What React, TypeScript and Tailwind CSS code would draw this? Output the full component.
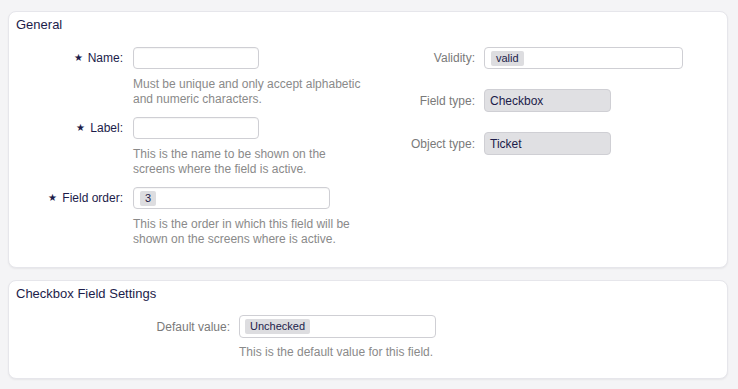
import React from "react";

const help = "text-[12px] leading-[15px] text-[#8a8a8a]";

function Star() {
  return <span className="mr-[5px] inline-block text-[10px] leading-none text-[#1c1c4a]">★</span>;
}

function Chip({ children }: { children: React.ReactNode }) {
  return (
    <span className="rounded-[2px] bg-[#dddde0] px-[5px] py-[1px] text-[11px] leading-[13px] text-[#1c1c4a]">
      {children}
    </span>
  );
}

function LeftRow({
  label,
  width,
  value,
  hint,
}: {
  label: string;
  width: string;
  value?: string;
  hint: string[];
}) {
  return (
    <div className="flex">
      <div className="flex h-[22px] w-[114px] items-center justify-end text-[12px] text-[#1c1c4a]">
        <Star />
        {label}
      </div>
      <div className="ml-[10px]">
        <div
          className={`flex h-[22px] items-center rounded-[4px] border border-[#cfcfd4] bg-white px-[6px] shadow-[inset_0_1px_1px_rgba(0,0,0,0.04)] ${width}`}
        >
          {value && <Chip>{value}</Chip>}
        </div>
        <div className={`mt-[8px] ${help}`}>
          {hint.map((h) => (
            <div key={h}>{h}</div>
          ))}
        </div>
      </div>
    </div>
  );
}

function RightRow({ label, children }: { label: string; children: React.ReactNode }) {
  return (
    <div className="flex items-center">
      <div className="w-[106px] text-right text-[12px] text-[#7a7a7a]">{label}</div>
      <div className="ml-[9px]">{children}</div>
    </div>
  );
}

export default function App() {
  return (
    <div className="min-h-screen bg-[#f4f4f6] pl-2 pr-[10px] pt-[11px] font-['Liberation_Sans',Arial,sans-serif]">
      <div className="rounded-[8px] border border-[#e6e6eb] bg-white pb-[20px] shadow-[0_1px_2px_rgba(0,0,0,0.06)]">
        <h2 className="px-[7px] pt-[5px] text-[13px] leading-[16px] text-[#1c1c4a]">General</h2>
        <div className="mt-[14px] flex">
          <div className="flex w-[360px] flex-col gap-[10px]">
            <LeftRow
              label="Name:"
              width="w-[126px]"
              hint={["Must be unique and only accept alphabetic", "and numeric characters."]}
            />
            <LeftRow
              label="Label:"
              width="w-[126px]"
              hint={["This is the name to be shown on the", "screens where the field is active."]}
            />
            <LeftRow
              label="Field order:"
              width="w-[197px]"
              value="3"
              hint={["This is the order in which this field will be", "shown on the screens where is active."]}
            />
          </div>
          <div className="flex flex-col gap-[20px]">
            <RightRow label="Validity:">
              <div className="flex h-[22px] w-[199px] items-center rounded-[4px] border border-[#cfcfd4] bg-white px-[6px]">
                <Chip>valid</Chip>
              </div>
            </RightRow>
            <RightRow label="Field type:">
              <div className="flex h-[23px] w-[127px] items-center rounded-[4px] border border-[#cfcfd4] bg-[#e0e0e3] px-[5px] text-[12px] text-[#1c1c4a]">
                Checkbox
              </div>
            </RightRow>
            <RightRow label="Object type:">
              <div className="flex h-[23px] w-[127px] items-center rounded-[4px] border border-[#cfcfd4] bg-[#e0e0e3] px-[5px] text-[12px] text-[#1c1c4a]">
                Ticket
              </div>
            </RightRow>
          </div>
        </div>
      </div>

      <div className="mt-[12px] rounded-[8px] border border-[#e6e6eb] bg-white pb-[18px] shadow-[0_1px_2px_rgba(0,0,0,0.06)]">
        <h2 className="px-[7px] pt-[5px] text-[13px] leading-[16px] text-[#1c1c4a]">Checkbox Field Settings</h2>
        <div className="mt-[13px] flex">
          <div className="flex h-[23px] w-[221px] items-center justify-end text-[12px] text-[#7a7a7a]">
            Default value:
          </div>
          <div className="ml-[9px]">
            <div className="flex h-[23px] w-[197px] items-center rounded-[4px] border border-[#cfcfd4] bg-white px-[5px]">
              <Chip>Unchecked</Chip>
            </div>
            <div className={`mt-[7px] ${help}`}>This is the default value for this field.</div>
          </div>
        </div>
      </div>
    </div>
  );
}
